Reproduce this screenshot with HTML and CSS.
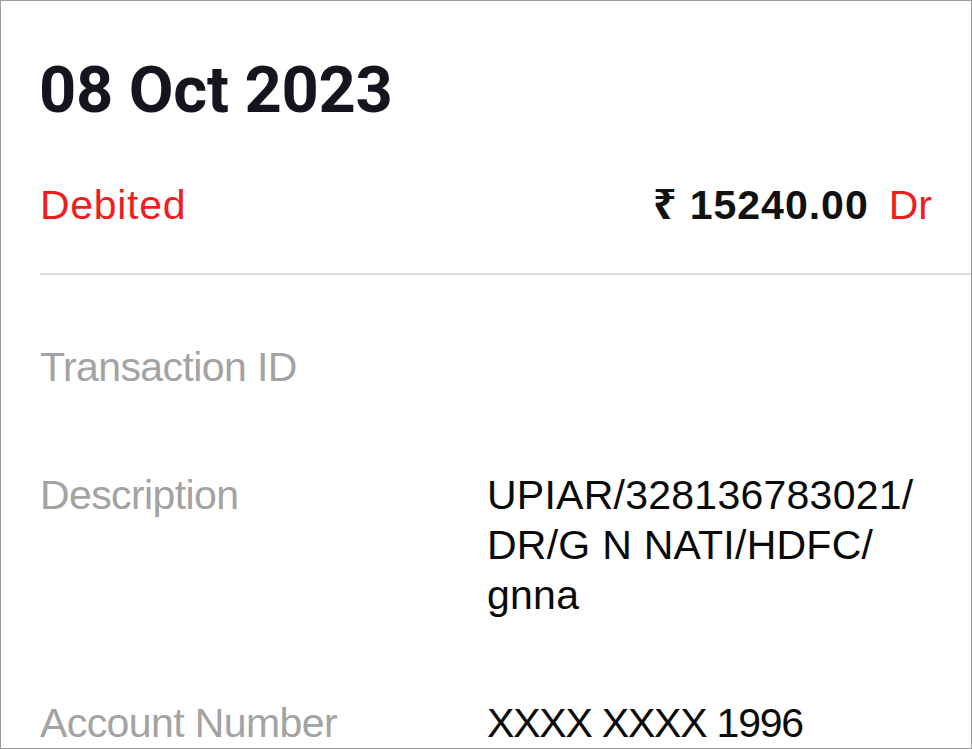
FILE: index.html
```html
<!DOCTYPE html>
<html>
<head>
<meta charset="utf-8">
<link rel="stylesheet" href="styles.css">
</head>
<body>
<div class="frame">
  <h1 class="date">08 Oct 2023</h1>
  <div class="summary">
    <span class="status">Debited</span>
    <span class="amount"><b>₹ 15240.00</b><span class="dr">Dr</span></span>
  </div>
  <hr class="divider">
  <div class="details">
    <div class="row">
      <div class="label">Transaction ID</div>
      <div class="value"></div>
    </div>
    <div class="row">
      <div class="label">Description</div>
      <div class="value">UPIAR/328136783021/<br>DR/G N NATI/HDFC/<br>gnna</div>
    </div>
    <div class="row">
      <div class="label">Account Number</div>
      <div class="value account">XXXX XXXX 1996</div>
    </div>
  </div>
</div>
</body>
</html>
```
FILE: styles.css
```css
html, body {
  margin: 0;
  padding: 0;
  background: #fff;
}
.frame {
  box-sizing: border-box;
  width: 972px;
  height: 749px;
  border: 1px solid #9c9c9c;
  overflow: hidden;
  font-family: "Liberation Sans", Arial, sans-serif;
  padding-top: 49px;
}
.date {
  margin: 0 0 0 38px;
  font-family: Roboto, sans-serif;
  font-weight: 700;
  font-size: 65px;
  line-height: 80px;
  color: #15151f;
  letter-spacing: -0.3px;
}
.summary {
  display: flex;
  justify-content: space-between;
  align-items: baseline;
  margin: 50px 39px 0 39px;
  font-size: 41px;
  line-height: 50px;
}
.status {
  color: #ef1d1d;
  letter-spacing: 0.7px;
}
.amount b {
  font-weight: 700;
  color: #111;
  letter-spacing: 1px;
  font-family: "Liberation Sans", "Noto Sans", "DejaVu Sans", sans-serif;
}
.dr {
  color: #ef1d1d;
  margin-left: 20px;
}
.divider {
  border: 0;
  height: 2px;
  background: #dcdcdc;
  margin: 43px 0 0 39px;
}
.details {
  display: flex;
  flex-direction: column;
  gap: 78px;
  margin: 67px 0 0 39px;
  font-size: 41px;
  line-height: 50px;
}
.row {
  display: flex;
}
.label {
  width: 447px;
  flex: none;
  color: #a3a3a3;
  letter-spacing: -0.6px;
}
.value {
  color: #0a0a0a;
  letter-spacing: 0.25px;
}
.value.account {
  letter-spacing: -1.2px;
}
```
